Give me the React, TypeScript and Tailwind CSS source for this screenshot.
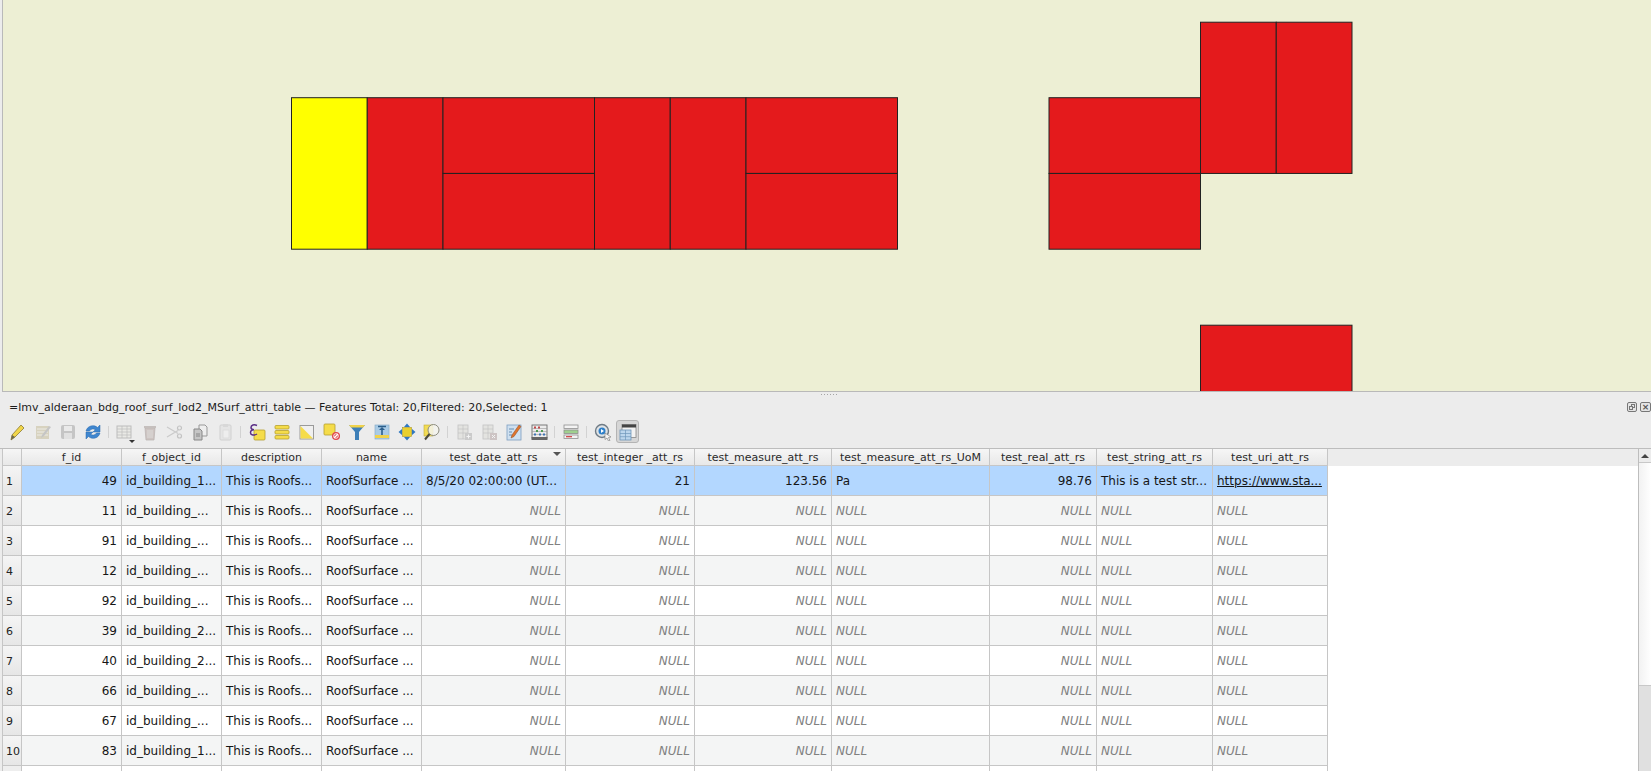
import React from "react";

const GRID =
  "grid grid-cols-[19px_100px_100px_100px_100px_144px_129px_137px_158px_107px_116px_115px]";

const HEADERS = [
  "f_id",
  "f_object_id",
  "description",
  "name",
  "test_date_att_rs",
  "test_integer _att_rs",
  "test_measure_att_rs",
  "test_measure_att_rs_UoM",
  "test_real_att_rs",
  "test_string_att_rs",
  "test_uri_att_rs",
];

const ROWS = [
  ["49", "id_building_1..."],
  ["11", "id_building_..."],
  ["91", "id_building_..."],
  ["12", "id_building_..."],
  ["92", "id_building_..."],
  ["39", "id_building_2..."],
  ["40", "id_building_2..."],
  ["66", "id_building_..."],
  ["67", "id_building_..."],
  ["83", "id_building_1..."],
];

const RED_RECTS = [
  [367.25, 97.7, 75.75, 151.5],
  [443, 97.7, 151.5, 75.75],
  [443, 173.45, 151.5, 75.75],
  [594.5, 97.7, 75.75, 151.5],
  [670.25, 97.7, 75.75, 151.5],
  [746, 97.7, 151.5, 75.75],
  [746, 173.45, 151.5, 75.75],
  [1049, 97.7, 151.5, 75.75],
  [1049, 173.45, 151.5, 75.75],
  [1200.5, 22.2, 75.75, 151.25],
  [1276.25, 22.2, 75.75, 151.25],
  [1200.5, 325.2, 151.5, 80],
];

function MapCanvas() {
  return (
    <div className="h-[392px] shrink-0 pl-[2px]">
      <div className="h-full border-b border-l border-[#b9b9b9] bg-[#edefd4]">
        <svg width="1648" height="391" viewBox="3 0 1648 391" className="block">
          <rect x="291.5" y="97.7" width="75.75" height="151.5" fill="#ffff00" stroke="#222222" />
          {RED_RECTS.map(([x, y, w, h]) => (
            <rect key={`${x}-${y}`} x={x} y={y} width={w} height={h} fill="#e41a1c" stroke="#222222" />
          ))}
        </svg>
      </div>
    </div>
  );
}

function Icon({ children, off }: { children: React.ReactNode; off?: boolean }) {
  return (
    <div className="flex h-full w-[25px] shrink-0 items-center justify-center">
      <svg width="18" height="18" viewBox="0 0 18 18" className={off ? "opacity-40" : ""}>
        {children}
      </svg>
    </div>
  );
}

function Sep() {
  return (
    <div className="flex h-full w-[7px] shrink-0 items-center justify-center">
      <div className="h-[12px] w-px bg-[#d2d2d2]" />
    </div>
  );
}

function Toolbar() {
  return (
    <div className="flex h-[23px] shrink-0 items-center pl-[5px]">
      {/* toggle editing */}
      <Icon>
        <path d="M2 17l1-5L12 2l3 3-9 9z" fill="#f1d64a" stroke="#8a7a35" strokeWidth=".8" />
        <path d="M2 17l1-5 3 2z" fill="#6b6650" />
      </Icon>
      {/* multi edit */}
      <Icon off>
        <rect x="2" y="3" width="13" height="13" fill="#b9ad7d" />
        <path d="M3 6h11M3 9h11M3 12h11" stroke="#efefe4" />
        <path d="M7 15l1-3 7-9 2 1-7 9z" fill="#8d8d8d" />
      </Icon>
      {/* save */}
      <Icon off>
        <rect x="2" y="2" width="14" height="14" rx="2" fill="#8c8c8c" />
        <rect x="5" y="3" width="8" height="5" fill="#e8e8e8" />
        <rect x="5" y="10" width="8" height="6" fill="#d2d2d2" />
      </Icon>
      {/* reload */}
      <Icon>
        <path d="M2 8a7 7 0 0 1 11.500-3.500L16 2v7H9l2.300-2.300A4 4 0 0 0 5.500 8z" fill="#3f86cf" stroke="#2a68ad" strokeWidth=".5" />
        <path d="M16 10a7 7 0 0 1-11.500 3.500L2 16V9h7l-2.300 2.300A4 4 0 0 0 12.500 10z" fill="#3f86cf" stroke="#2a68ad" strokeWidth=".5" />
      </Icon>
      <Sep />
      {/* add feature */}
      <div className="relative flex h-full w-[25px] shrink-0 items-center justify-center">
        <svg width="18" height="18" viewBox="0 0 18 18" className="opacity-40">
          <rect x="1" y="3" width="14" height="12" fill="#e5e5dc" stroke="#777" />
          <path d="M1 6h14M1 9h14M1 12h14M6 3v12M11 3v12" stroke="#777" strokeWidth=".7" />
        </svg>
        <div className="absolute bottom-0 right-[2px] h-0 w-0 border-x-[3px] border-t-[3px] border-x-transparent border-t-[#333]" />
      </div>
      {/* delete */}
      <Icon off>
        <path d="M4 5h10l-1 12H5z" fill="#a08a84" stroke="#6d5c58" strokeWidth=".7" />
        <rect x="3" y="3" width="12" height="2" fill="#8d7d78" />
        <path d="M7 7v8M9 7v8M11 7v8" stroke="#ddd" strokeWidth=".7" />
      </Icon>
      {/* cut */}
      <Icon off>
        <circle cx="13.500" cy="5" r="2" fill="none" stroke="#888" strokeWidth="1.200" />
        <circle cx="13.500" cy="13" r="2" fill="none" stroke="#888" strokeWidth="1.200" />
        <path d="M1 4l11 6.500M1 14l11-6.500" stroke="#999" strokeWidth="1.200" />
      </Icon>
      {/* copy */}
      <Icon>
        <path d="M8 2h6l2 2v9H8z" fill="#eee" stroke="#999" />
        <path d="M3 6h6l2 2v9H3z" fill="#c5c5c5" stroke="#888" />
        <path d="M5 11h4M5 13h4" stroke="#777" strokeWidth=".8" />
      </Icon>
      {/* paste */}
      <Icon off>
        <rect x="4" y="2" width="11" height="15" rx="1" fill="#ddd" stroke="#aaa" />
        <rect x="7" y="1" width="5" height="3" fill="#bbb" />
        <rect x="7" y="7" width="6" height="8" fill="#f2f2f2" stroke="#bbb" strokeWidth=".7" />
      </Icon>
      <Sep />
      {/* select by expression */}
      <Icon>
        <rect x="6" y="7" width="11" height="10" rx="1" fill="#f5dc4a" stroke="#b59f2e" strokeWidth=".8" />
        <path d="M9 2.500C6 1 3 2 3 4.500c0 1.500 1.500 2.200 3 2.200-2 0-3.500 1-3.500 3C2.500 12 6 13 9 11" fill="none" stroke="#5b2f86" strokeWidth="1.500" />
      </Icon>
      {/* select all */}
      <Icon>
        <rect x="2" y="2.500" width="14" height="3.500" rx="1" fill="#f5dc4a" stroke="#b59f2e" strokeWidth=".8" />
        <rect x="2" y="7.500" width="14" height="3.500" rx="1" fill="#f5dc4a" stroke="#b59f2e" strokeWidth=".8" />
        <rect x="2" y="12.500" width="14" height="3.500" rx="1" fill="#f5dc4a" stroke="#b59f2e" strokeWidth=".8" />
      </Icon>
      {/* invert */}
      <Icon>
        <rect x="2" y="2.500" width="13.500" height="13.500" fill="#f0f0f0" stroke="#9a9a9a" />
        <path d="M2.500 3v12.500H15z" fill="#f5dc4a" />
      </Icon>
      {/* deselect */}
      <Icon>
        <rect x="1" y="1" width="11" height="11" rx="1" fill="#f5dc4a" stroke="#b59f2e" strokeWidth=".8" />
        <circle cx="13" cy="13" r="4" fill="#e0454a" />
        <path d="M11 15l4-4" stroke="#fff" strokeWidth="1.200" />
        <circle cx="13" cy="13" r="2.300" fill="none" stroke="#fff" strokeWidth=".9" />
      </Icon>
      {/* filter */}
      <Icon>
        <path d="M1 2h16l-6 7v8H7V9z" fill="#3d7fb8" />
        <path d="M1 2h16l-2 2.500H3z" fill="#f0d24a" />
      </Icon>
      {/* move selection to top */}
      <Icon>
        <rect x="2" y="2" width="14" height="14" fill="#a9cbe6" stroke="#8aaec9" strokeWidth=".7" />
        <rect x="2" y="12" width="14" height="3" fill="#f0d24a" />
        <path d="M5 3.500h8M9 5v7" stroke="#2c5f8c" strokeWidth="1.600" />
        <path d="M6 7l3-3 3 3z" fill="#2c5f8c" />
      </Icon>
      {/* pan to selected */}
      <Icon>
        <rect x="4.500" y="4.500" width="9" height="9" fill="#e9d02e" stroke="#a8962a" strokeWidth=".6" />
        <path d="M9 .5l3 3.500H6zM9 17.500l3-3.500H6zM.5 9L4 6v6zM17.500 9L14 6v6z" fill="#2f78c0" />
      </Icon>
      {/* zoom to selected */}
      <Icon>
        <rect x="1" y="2" width="9" height="11" fill="#f2dc55" stroke="#c0ab35" strokeWidth=".6" />
        <circle cx="10.500" cy="7" r="5.500" fill="#f4f4ee" fillOpacity=".85" stroke="#8d8d80" />
        <path d="M6.500 11L2 16.500" stroke="#4a4a3a" strokeWidth="2" />
      </Icon>
      <Sep />
      {/* new field */}
      <Icon off>
        <rect x="3" y="2" width="10" height="14" fill="#d8d8d0" stroke="#888" strokeWidth=".8" />
        <path d="M8 2v14M3 6h10M3 10h10" stroke="#888" strokeWidth=".7" />
        <rect x="10" y="10" width="7" height="7" fill="#9a9a9a" />
        <path d="M13.500 11.500v4M11.500 13.500h4" stroke="#fff" />
      </Icon>
      {/* delete field */}
      <Icon off>
        <rect x="3" y="2" width="10" height="14" fill="#d8d8d0" stroke="#888" strokeWidth=".8" />
        <path d="M8 2v14M3 6h10M3 10h10" stroke="#888" strokeWidth=".7" />
        <rect x="10" y="10" width="7" height="7" fill="#a08a8a" />
        <path d="M12 12l3 3M15 12l-3 3" stroke="#fff" />
      </Icon>
      {/* organize / edit */}
      <Icon>
        <rect x="2" y="2" width="14" height="15" fill="#cfe0f0" stroke="#7d9fc0" strokeWidth=".8" />
        <path d="M4 6h5M4 9h3M4 12h3" stroke="#5f86ab" strokeWidth=".9" />
        <path d="M6 15l1-3 7-10 2 1.500-7 10z" fill="#e0752e" stroke="#8c4a22" strokeWidth=".5" />
      </Icon>
      {/* field calculator */}
      <Icon>
        <rect x="2" y="2" width="15" height="13" fill="#ececec" stroke="#6e6e6e" strokeWidth=".9" />
        <rect x="1.500" y="14" width="16" height="3" fill="#666" />
        <path d="M2 5.500h15M2 8.500h15M2 11.500h15" stroke="#999" strokeWidth=".6" />
        <path d="M4 4.500h2M8 4.500h2" stroke="#c2484a" strokeWidth="2" />
        <path d="M6 8h2M11 8h2" stroke="#4f9a55" strokeWidth="2" />
        <path d="M4 11.500h2M9 11.500h2M13 11.500h2" stroke="#3f74b5" strokeWidth="2" />
      </Icon>
      <Sep />
      {/* conditional formatting */}
      <Icon>
        <rect x="2" y="2" width="14" height="3.500" fill="#f3f3f3" stroke="#8f8f8f" strokeWidth=".8" />
        <rect x="2" y="7" width="14" height="3.500" fill="#9fd08f" stroke="#8f8f8f" strokeWidth=".8" />
        <rect x="2" y="12" width="14" height="3.500" fill="#f3f3f3" stroke="#8f8f8f" strokeWidth=".8" />
        <path d="M4 13.700h6" stroke="#d0393b" strokeWidth="1.200" />
      </Icon>
      <Sep />
      {/* dock */}
      <Icon>
        <circle cx="8" cy="8" r="6.500" fill="#dfe3e6" stroke="#6f7b85" strokeWidth="1.400" />
        <circle cx="8" cy="8" r="3.500" fill="#2d7fc9" />
        <path d="M7 6l3 2-3 2z" fill="#fff" />
        <path d="M11 10l6 4-2.500.5 1.500 3-1.500.5-1.500-3-2 1.500z" fill="#f5f5f5" stroke="#777" strokeWidth=".6" />
      </Icon>
      {/* table view, toggled */}
      <div className="ml-[1px] flex h-[23px] w-[23px] shrink-0 items-center justify-center rounded-[3px] border border-[#b4b4b4] bg-[#d6d6d6]">
        <svg width="18" height="18" viewBox="0 0 18 18">
          <rect x="3" y="1.500" width="14" height="13" fill="#f2f2f2" stroke="#888" strokeWidth=".8" />
          <rect x="3" y="1.500" width="14" height="3" fill="#444" />
          <rect x="1" y="7" width="11" height="10" fill="#bcd6ec" stroke="#6e96ba" strokeWidth=".8" />
          <path d="M1 10.500h11M1 13.700h11M6.500 7v10" stroke="#6e96ba" strokeWidth=".7" />
        </svg>
      </div>
    </div>
  );
}

function TitleRow() {
  return (
    <div className="flex h-[28px] shrink-0 items-start justify-between pl-[9px] pt-[9px]">
      <div className="text-[11px] leading-[14px] text-[#1c1c1c]">
        =lmv_alderaan_bdg_roof_surf_lod2_MSurf_attri_table — Features Total: 20,Filtered: 20,Selected: 1
      </div>
      <div className="mt-px flex gap-[3px]">
        <div className="relative h-[10px] w-[10px] rounded-[2px] border border-[#777] bg-[#e4e4e4]">
          <div className="absolute left-[3px] top-px h-[4px] w-[4px] border border-[#777]" />
          <div className="absolute left-px top-[3px] h-[4px] w-[4px] border border-[#777] bg-[#e4e4e4]" />
        </div>
        <div className="flex h-[10px] w-[11px] items-center justify-center rounded-[2px] border border-[#777] bg-[#e4e4e4] text-[9px] font-bold leading-none text-[#555]">
          ×
        </div>
      </div>
    </div>
  );
}

const CELL = "h-[30px] whitespace-nowrap border-b border-r border-[#c6c6c6] px-[4px] text-[12px] leading-[30px] text-[#161616]";
const NULL_CELL = "h-[30px] whitespace-nowrap border-b border-r border-[#c6c6c6] px-[4px] text-[12px] italic leading-[30px] text-[#808080]";

function DataRow({ index, row }: { index: number; row: string[] }) {
  const selected = index === 0;
  const bg = selected ? "bg-[#b3d7ff]" : index % 2 === 1 ? "bg-[#f4f5f5]" : "bg-white";
  return (
    <div className={`${GRID} h-[30px] w-fit ${bg}`}>
      <div className="h-[30px] border-b border-r border-[#c6c6c6] bg-gradient-to-b from-[#f5f5f5] to-[#e6e6e6] pl-[3px] text-[11px] leading-[31px] text-[#222]">
        {index + 1}
      </div>
      <div className={`${CELL} text-right`}>{row[0]}</div>
      <div className={CELL}>{row[1]}</div>
      <div className={CELL}>This is Roofs...</div>
      <div className={CELL}>RoofSurface ...</div>
      {selected ? (
        <>
          <div className={CELL}>8/5/20 02:00:00 (UT...</div>
          <div className={`${CELL} text-right`}>21</div>
          <div className={`${CELL} text-right`}>123.56</div>
          <div className={CELL}>Pa</div>
          <div className={`${CELL} text-right`}>98.76</div>
          <div className={CELL}>This is a test str...</div>
          <div className={`${CELL} underline`}>https://www.sta...</div>
        </>
      ) : (
        <>
          <div className={`${NULL_CELL} text-right`}>NULL</div>
          <div className={`${NULL_CELL} text-right`}>NULL</div>
          <div className={`${NULL_CELL} text-right`}>NULL</div>
          <div className={NULL_CELL}>NULL</div>
          <div className={`${NULL_CELL} text-right`}>NULL</div>
          <div className={NULL_CELL}>NULL</div>
          <div className={NULL_CELL}>NULL</div>
        </>
      )}
    </div>
  );
}

function AttributeTable() {
  return (
    <div className="mt-[5px] flex min-h-0 flex-1 border-t border-[#bdbdbd] pl-[2px]">
      <div className="min-w-0 flex-1 overflow-hidden border-l border-[#c6c6c6] bg-white">
        <div className="bg-[#ececec]">
          <div className={`${GRID} h-[17px] w-fit`}>
            <div className="h-[17px] border-b border-r border-[#c6c6c6] bg-gradient-to-b from-[#f6f6f6] to-[#e8e8e8]" />
            {HEADERS.map((h, i) => (
              <div
                key={h}
                className="relative h-[17px] whitespace-nowrap border-b border-r border-[#c6c6c6] bg-gradient-to-b from-[#f6f6f6] to-[#e8e8e8] text-center text-[11px] leading-[18px] text-[#2a2a2a]"
              >
                {h}
                {i === 4 && (
                  <div className="absolute right-[4px] top-[3px] h-0 w-0 border-x-[4px] border-t-[4px] border-x-transparent border-t-[#555]" />
                )}
              </div>
            ))}
          </div>
        </div>
        {ROWS.map((row, i) => (
          <DataRow key={row[0]} index={i} row={row} />
        ))}
        <div className={`${GRID} h-[30px] w-fit`}>
          <div className="border-r border-[#c6c6c6] bg-[#eeeeee]" />
          {HEADERS.map((h) => (
            <div key={h} className="border-r border-[#c6c6c6]" />
          ))}
        </div>
      </div>
      <div className="flex w-[13px] shrink-0 flex-col border-l border-[#bdbdbd] bg-gradient-to-r from-[#f2f2f2] to-white">
        <div className="flex h-[14px] shrink-0 items-center justify-center border-b border-[#c8c8c8] bg-[#ececec]">
          <div className="h-0 w-0 border-x-[4px] border-b-[4px] border-x-transparent border-b-[#444]" />
        </div>
        <div className="flex-1" />
        <div className="h-[86px] shrink-0 border-t border-[#c8c8c8] bg-[#e0e0e0]" />
      </div>
    </div>
  );
}

export default function App() {
  return (
    <div className="flex h-[771px] w-[1651px] flex-col overflow-hidden bg-[#ececec] font-['DejaVu_Sans',sans-serif]">
      <MapCanvas />
      <div className="relative">
        <div className="absolute left-[821px] top-[2px] flex gap-[2px]">
          {[0, 1, 2, 3, 4, 5].map((i) => (
            <div key={i} className="h-px w-px bg-[#a5a5a5]" />
          ))}
        </div>
      </div>
      <TitleRow />
      <Toolbar />
      <AttributeTable />
    </div>
  );
}
